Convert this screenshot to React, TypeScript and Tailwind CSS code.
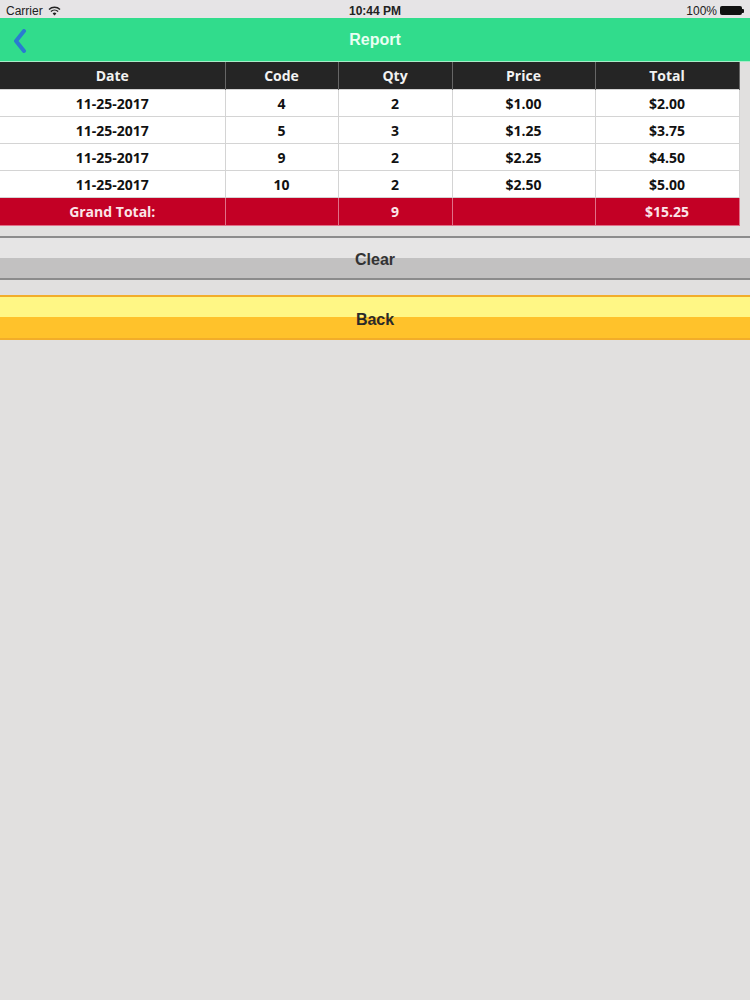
const rows = [
  { date: "11-25-2017", code: "4", qty: "2", price: "$1.00", total: "$2.00" },
  { date: "11-25-2017", code: "5", qty: "3", price: "$1.25", total: "$3.75" },
  { date: "11-25-2017", code: "9", qty: "2", price: "$2.25", total: "$4.50" },
  { date: "11-25-2017", code: "10", qty: "2", price: "$2.50", total: "$5.00" },
];

const cols = ["w-[225px]", "w-[113px]", "w-[114px]", "w-[143px]", "w-[144px]"];

export default function App() {
  return (
    <div className="w-[750px] h-[1000px] bg-[#e1e0df] font-['Liberation_Sans',Arial,sans-serif]">
      {/* status bar */}
      <div className="relative h-[18px] bg-[#e6e4e6] flex items-center pt-[3px] px-[6px] text-[12px] text-[#222]">
        <span>Carrier</span>
        <svg width="13" height="10" viewBox="0 0 13 10" className="ml-[5px]">
          <path d="M6.5 9.5 L4.6 7.4 A2.8 2.8 0 0 1 8.4 7.4 Z" fill="#222" />
          <path d="M2.9 5.6 A5.2 5.2 0 0 1 10.1 5.6" stroke="#222" strokeWidth="1.4" fill="none" />
          <path d="M1 3.5 A7.8 7.8 0 0 1 12 3.5" stroke="#222" strokeWidth="1.4" fill="none" />
        </svg>
        <span className="absolute left-0 right-0 text-center font-bold text-[12px] pointer-events-none">10:44 PM</span>
        <div className="ml-auto flex items-center gap-[3px]">
          <span>100%</span>
          <div className="flex items-center">
            <div className="w-[22px] h-[9px] bg-[#111] rounded-[2px]" />
            <div className="w-[2px] h-[4px] bg-[#111] rounded-r-[1px]" />
          </div>
        </div>
      </div>

      {/* nav bar */}
      <div className="relative h-[44px] bg-[#31dc8c] border-b border-[#a8ecc8] flex items-center justify-center pt-[1px]">
        <svg width="14" height="24" viewBox="0 0 14 24" className="absolute left-[13px] top-[11px]">
          <path d="M11 2 L3 12 L11 22" stroke="#2a7bd0" strokeWidth="4" fill="none" strokeLinecap="round" strokeLinejoin="round" />
        </svg>
        <span className="text-[16px] font-bold text-[#e9fff2]">Report</span>
      </div>

      {/* table */}
      <table className="w-[739px] table-fixed border-collapse font-['Open_Sans',sans-serif] font-bold text-[14px]">
        <thead>
          <tr className="h-[27px] bg-[#252525] text-[#f2f2f2]">
            {["Date", "Code", "Qty", "Price", "Total"].map((h, i) => (
              <th key={h} className={`${cols[i]} border-x border-[#666] first:border-l-0 text-center p-0 pt-[1px]`}>{h}</th>
            ))}
          </tr>
        </thead>
        <tbody>
          {rows.map((r, i) => (
            <tr key={i} className="h-[27px] bg-white text-[#111]">
              <td className="border border-[#d4d4d4] border-l-0 text-center p-0 pt-[1px]">{r.date}</td>
              <td className="border border-[#d4d4d4] text-center p-0 pt-[1px]">{r.code}</td>
              <td className="border border-[#d4d4d4] text-center p-0 pt-[1px]">{r.qty}</td>
              <td className="border border-[#d4d4d4] text-center p-0 pt-[1px]">{r.price}</td>
              <td className="border border-[#d4d4d4] text-center p-0 pt-[1px]">{r.total}</td>
            </tr>
          ))}
          <tr className="h-[28px] bg-[#c30025] text-[#fbe4e8]">
            <td className="border border-[#e07088] border-l-0 text-center p-0 pt-[1px]">Grand Total:</td>
            <td className="border border-[#e07088] text-center p-0"></td>
            <td className="border border-[#e07088] text-center p-0 pt-[1px]">9</td>
            <td className="border border-[#e07088] text-center p-0"></td>
            <td className="border border-[#e07088] text-center p-0 pt-[1px]">$15.25</td>
          </tr>
        </tbody>
      </table>

      {/* buttons */}
      <div className="mt-[10px] flex flex-col">
        <button className="w-full h-[44px] pt-[5px] border-y-2 border-[#8c8c8c] bg-[linear-gradient(#e6e5e5_0,#e6e5e5_50%,#c2c1c1_50%,#c2c1c1_100%)] text-[16px] font-bold text-[#333]">
          Clear
        </button>
        <button className="mt-[15px] w-full h-[45px] pt-[5px] border-y-2 border-[#f2ad2a] bg-[linear-gradient(#fff785_0,#fff785_50%,#ffc22b_50%,#ffc22b_100%)] text-[16px] font-bold text-[#2a2a2a]">
          Back
        </button>
      </div>
    </div>
  );
}
